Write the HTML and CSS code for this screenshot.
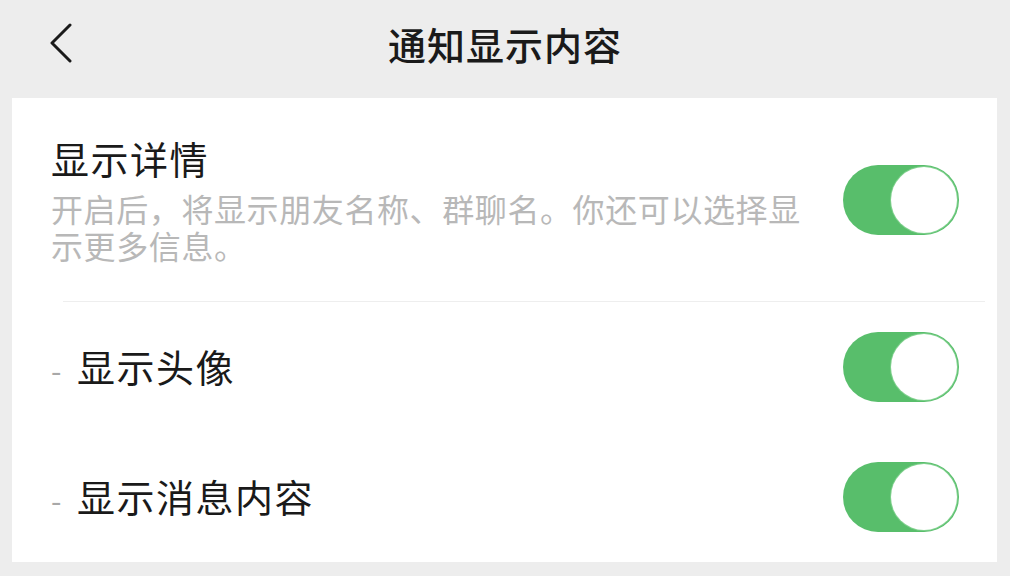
FILE: index.html
```html
<!DOCTYPE html>
<html lang="zh-CN">
<head>
    <meta charset="UTF-8">
    <meta name="viewport" content="width=device-width, initial-scale=1.0">
    <title>通知显示内容</title>
    <link rel="stylesheet" href="styles.css">
</head>
<body>
    <div class="header">
        <div class="back">
            <svg width="24" height="40" viewBox="0 0 24 40">
                <polyline points="21,2 3,20 21,38" fill="none" stroke="#1a1a1a" stroke-width="3" stroke-linecap="round" stroke-linejoin="round"/>
            </svg>
        </div>
        <h1>通知显示内容</h1>
        <div></div>
    </div>

    <div class="card">
        <div class="row row-main">
            <div class="text">
                <div class="label">显示详情</div>
                <div class="desc">开启后，将显示朋友名称、群聊名。你还可以选择显示更多信息。</div>
            </div>
            <div class="switch on"><div class="knob"></div></div>
        </div>

        <div class="divider"></div>

        <div class="row">
            <div class="label"><span class="dash">-</span>显示头像</div>
            <div class="switch on"><div class="knob"></div></div>
        </div>

        <div class="row">
            <div class="label"><span class="dash">-</span>显示消息内容</div>
            <div class="switch on"><div class="knob"></div></div>
        </div>
    </div>
</body>
</html>
```

FILE: styles.css
```css
body {
    font-family: "Noto Sans CJK SC", "Noto Sans", sans-serif;
    background-color: #ededed;
    margin: 0;
    padding: 0;
    color: #1a1a1a;
}

.header {
    height: 86px;
    display: grid;
    grid-template-columns: 1fr auto 1fr;
    align-items: center;
}

.back {
    padding-left: 49px;
    display: flex;
    align-items: center;
}

h1 {
    margin: 0;
    font-size: 38px;
    font-weight: 500;
    letter-spacing: 1px;
    color: #1a1a1a;
}

.card {
    background-color: #ffffff;
    margin: 12px 13px 0 12px;
}

.row {
    height: 130px;
    display: flex;
    align-items: center;
    justify-content: space-between;
    padding: 0 38px 0 39px;
}

.row-main {
    height: 203px;
}

.text {
    width: 760px;
}

.label {
    font-size: 38px;
    line-height: 46px;
    letter-spacing: 1.5px;
    color: #1a1a1a;
}

.desc {
    margin-top: 9px;
    font-size: 32px;
    line-height: 37px;
    letter-spacing: 0.6px;
    color: #b8b8b8;
}

.dash {
    color: #a8a8a8;
    font-size: 30px;
    margin-right: 14px;
}

.divider {
    height: 1px;
    background-color: #eeeeee;
    margin: 0 12px 0 51px;
}

.switch {
    width: 116px;
    height: 70px;
    border-radius: 35px;
    background-color: #e5e5e5;
    padding: 2px;
    box-sizing: border-box;
    display: flex;
    flex-shrink: 0;
}

.switch.on {
    background-color: #58be6b;
    justify-content: flex-end;
}

.knob {
    width: 66px;
    height: 66px;
    border-radius: 50%;
    background-color: #ffffff;
    box-shadow: 0 0 0 1px #7fd08d;
}
```
